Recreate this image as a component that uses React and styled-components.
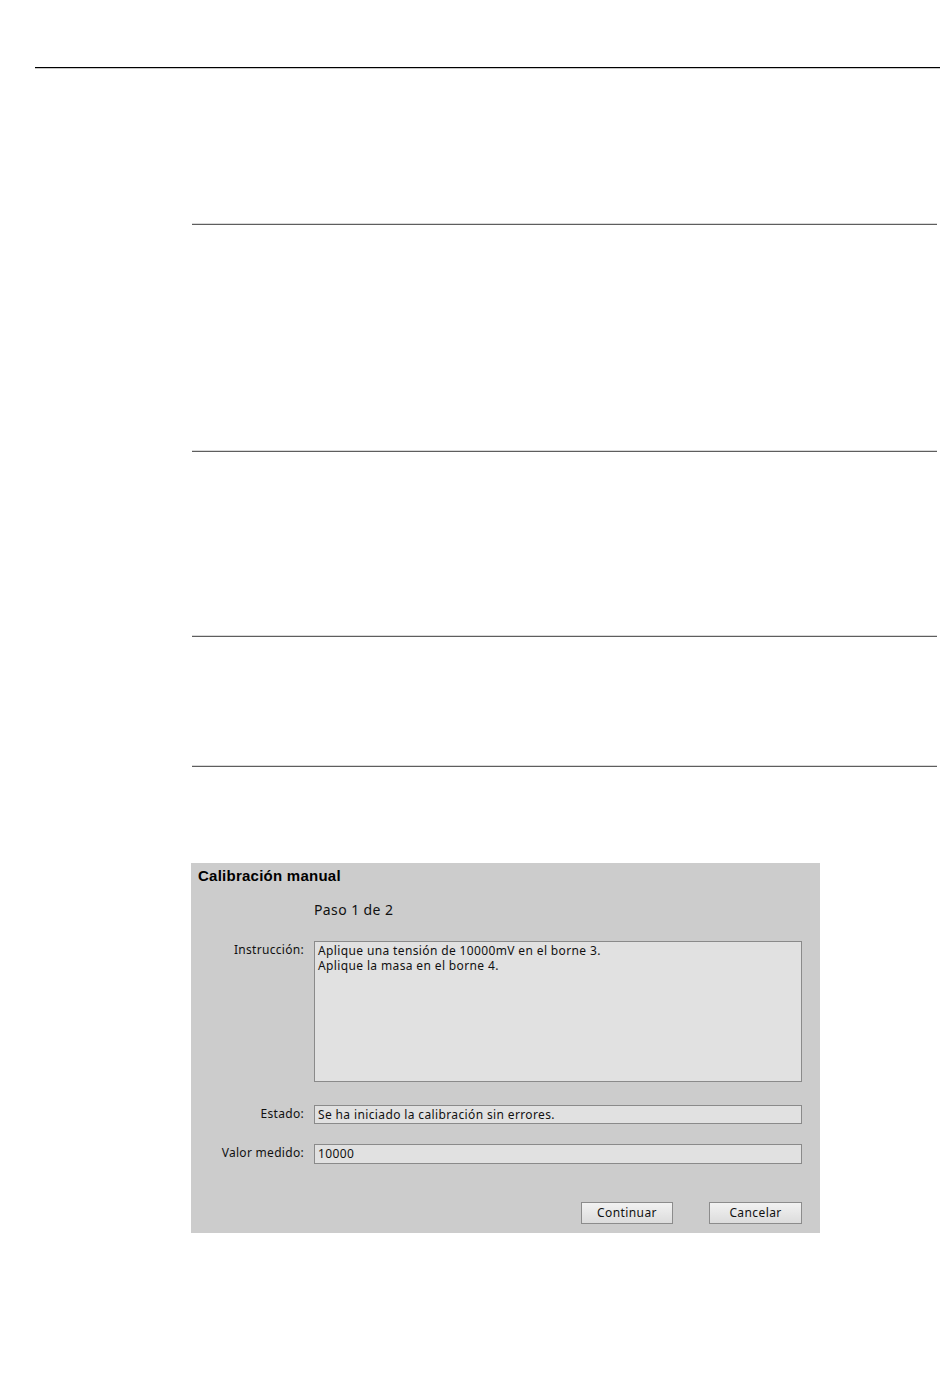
import React from 'react';
import styled, { createGlobalStyle } from 'styled-components';

const Global = createGlobalStyle`
  body {
    margin: 0;
    background: #ffffff;
    font-family: "Noto Sans", "Liberation Sans", sans-serif;
  }
`;

const Page = styled.div`
  width: 950px;
  height: 1397px;
  padding-top: 67px;
  box-sizing: border-box;
`;

const TopRule = styled.div`
  margin-left: 35px;
  width: 905px;
  height: 1px;
  background: #000000;
  border-bottom: 1px solid #c8c8c8;
`;

const Content = styled.div`
  margin-left: 192px;
  width: 745px;
  display: flex;
  flex-direction: column;
`;

const Rule = styled.div`
  margin-top: ${(p) => p.$gap}px;
  height: 1px;
  background: #5e5e5e;
  border-top: 1px solid #d8d8d8;
`;

const Dialog = styled.div`
  margin-top: 96px;
  margin-left: -1px;
  width: 629px;
  height: 370px;
  background: #cccccc;
  box-sizing: border-box;
  padding: 4px 18px 0 7px;
  display: flex;
  flex-direction: column;
`;

const Title = styled.div`
  font-family: "Liberation Sans", Arial, sans-serif;
  font-weight: bold;
  font-size: 15px;
  letter-spacing: 0.25px;
  color: #000;
  height: 18px;
  line-height: 18px;
`;

const Form = styled.div`
  display: grid;
  grid-template-columns: 106px 488px;
  column-gap: 10px;
  align-items: start;
  margin-top: 16px;
`;

const Step = styled.div`
  grid-column: 2;
  font-size: 14px;
  letter-spacing: 0.4px;
  color: #111;
  line-height: 18px;
  margin-bottom: 22px;
`;

const Label = styled.div`
  text-align: right;
  font-size: 12px;
  letter-spacing: 0.3px;
  color: #111;
  line-height: 17px;
`;

const Field = styled.div`
  box-sizing: border-box;
  height: ${(p) => p.$h}px;
  margin-bottom: ${(p) => p.$gap || 0}px;
  background: #e1e1e1;
  border: 1px solid #8a8a8a;
  padding: 1px 3px;
  font-size: 12px;
  letter-spacing: 0.37px;
  line-height: 15px;
  color: #111;
  white-space: pre-line;
`;

const Buttons = styled.div`
  display: flex;
  justify-content: flex-end;
  gap: 36px;
  margin-top: 38px;
`;

const Button = styled.button`
  box-sizing: border-box;
  width: ${(p) => p.$w}px;
  height: 22px;
  border: 1px solid #8c8c8c;
  background: linear-gradient(#f2f2f2, #dcdcdc);
  font-family: "Noto Sans", "Liberation Sans", sans-serif;
  font-size: 12px;
  letter-spacing: 0.4px;
  color: #111;
  padding: 0;
  line-height: 18px;
`;

export default function App() {
  return (
    <Page>
      <Global />
      <TopRule />
      <Content>
        <Rule $gap={154} />
        <Rule $gap={225} />
        <Rule $gap={183} />
        <Rule $gap={128} />
        <Dialog>
          <Title>Calibración manual</Title>
          <Form>
            <Step>Paso 1 de 2</Step>
            <Label>Instrucción:</Label>
            <Field $h={141} $gap={23}>
              {'Aplique una tensión de 10000mV en el borne 3.\nAplique la masa en el borne 4.'}
            </Field>
            <Label>Estado:</Label>
            <Field $h={19} $gap={20}>Se ha iniciado la calibración sin errores.</Field>
            <Label>Valor medido:</Label>
            <Field $h={20}>10000</Field>
          </Form>
          <Buttons>
            <Button $w={92}>Continuar</Button>
            <Button $w={93}>Cancelar</Button>
          </Buttons>
        </Dialog>
      </Content>
    </Page>
  );
}
